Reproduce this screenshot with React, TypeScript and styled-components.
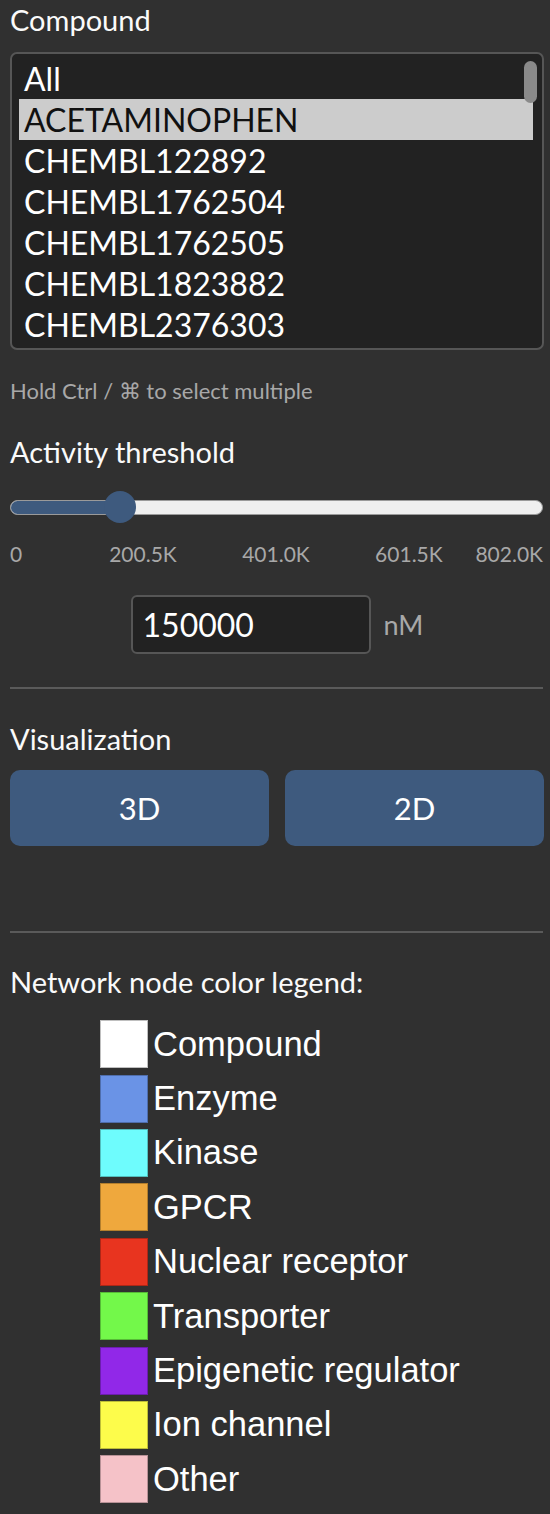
import React, { useState } from "react";
import styled, { createGlobalStyle } from "styled-components";

const GlobalStyle = createGlobalStyle`
  html, body {
    margin: 0;
    padding: 0;
    background: #303030;
  }
  * { box-sizing: border-box; }
`;

const Sidebar = styled.div`
  width: 550px;
  padding: 0 6px 12px 10px;
  font-family: Lato, "Noto Sans", sans-serif;
  color: #fafafa;
  display: flex;
  flex-direction: column;
`;

const Label = styled.div<{ $top?: number }>`
  font-size: 29px;
  line-height: 34px;
  margin-top: ${(p) => p.$top ?? 0}px;
`;

const ListBox = styled.div`
  position: relative;
  margin-top: 15px;
  height: 298px;
  background: #222222;
  border: 2px solid #565656;
  border-radius: 7px;
  padding: 4px 9px 0 7px;
  overflow: hidden;
`;

const Option = styled.div<{ $selected?: boolean }>`
  height: 41px;
  line-height: 41px;
  padding-left: 5px;
  font-size: 32px;
  white-space: nowrap;
  background: ${(p) => (p.$selected ? "#cccccc" : "transparent")};
  color: ${(p) => (p.$selected ? "#111111" : "#ffffff")};
`;

const ScrollThumb = styled.div`
  position: absolute;
  right: 5px;
  top: 7px;
  width: 13px;
  height: 42px;
  border-radius: 7px;
  background: #8a8a8a;
`;

const Hint = styled.div`
  margin-top: 27px;
  font-size: 22px;
  line-height: 28px;
  color: #a8a8a8;
`;

const SliderArea = styled.div`
  margin-top: 20px;
  width: 533px;
  height: 36px;
  display: flex;
  align-items: center;
  position: relative;
`;

const Track = styled.div`
  width: 533px;
  height: 15px;
  border-radius: 8px;
  background: #efefef;
  border: 1px solid #9a9a9a;
  overflow: hidden;
`;

const Fill = styled.div`
  height: 100%;
  background: #3e5a7e;
`;

const Thumb = styled.div`
  position: absolute;
  top: 50%;
  width: 32px;
  height: 32px;
  margin: -16px 0 0 -16px;
  border-radius: 50%;
  background: #3e5a7e;
`;

const Ticks = styled.div`
  margin-top: 17px;
  width: 533px;
  display: grid;
  grid-template-columns: repeat(8, 1fr);
  font-size: 21px;
  line-height: 24px;
  color: #a8a8a8;
`;

const Tick = styled.span<{ $col: string; $align: string }>`
  grid-column: ${(p) => p.$col};
  justify-self: ${(p) => p.$align};
  white-space: nowrap;
`;

const InputRow = styled.div`
  margin-top: 29px;
  display: flex;
  align-items: center;
  justify-content: center;
  gap: 13px;
`;

const NumberInput = styled.input`
  width: 240px;
  height: 59px;
  background: #222222;
  border: 2px solid #565656;
  border-radius: 6px;
  color: #ffffff;
  font-family: Lato, "Noto Sans", sans-serif;
  font-size: 32px;
  padding: 0 10px;
  outline: none;
`;

const Unit = styled.span`
  font-size: 27px;
  color: #a8a8a8;
`;

const Divider = styled.hr<{ $top: number }>`
  margin: ${(p) => p.$top}px 0 0 0;
  width: 533px;
  border: none;
  height: 2px;
  background: #5a5a5a;
`;

const ButtonRow = styled.div`
  margin-top: 14px;
  display: grid;
  grid-template-columns: 1fr 1fr;
  gap: 16px;
`;

const ModeButton = styled.button`
  height: 76px;
  border: none;
  border-radius: 10px;
  background: #3e5a7e;
  color: #ffffff;
  font-family: Lato, "Noto Sans", sans-serif;
  font-size: 31px;
  cursor: pointer;
`;

const Legend = styled.div`
  margin-top: 18px;
  padding-left: 90px;
  display: flex;
  flex-direction: column;
  font-family: "Liberation Sans", Arial, sans-serif;
`;

const LegendRow = styled.div`
  height: 54.4px;
  display: flex;
  align-items: center;
  gap: 5px;
  font-size: 34.5px;
  color: #ffffff;
`;

const Swatch = styled.div<{ $color: string }>`
  width: 48px;
  height: 48px;
  background: ${(p) => p.$color};
  border: 1px solid rgba(0, 0, 0, 0.25);
`;

const compounds = [
  "All",
  "ACETAMINOPHEN",
  "CHEMBL122892",
  "CHEMBL1762504",
  "CHEMBL1762505",
  "CHEMBL1823882",
  "CHEMBL2376303",
];

const legend: [string, string][] = [
  ["Compound", "#ffffff"],
  ["Enzyme", "#6a93e6"],
  ["Kinase", "#6efcfd"],
  ["GPCR", "#efa83d"],
  ["Nuclear receptor", "#e8341f"],
  ["Transporter", "#73f84a"],
  ["Epigenetic regulator", "#9128e8"],
  ["Ion channel", "#fdfc4b"],
  ["Other", "#f5c2c8"],
];

const MAX = 802000;
const TRACK_W = 533;
const THUMB_D = 32;

export default function App() {
  const [selected, setSelected] = useState("ACETAMINOPHEN");
  const [threshold, setThreshold] = useState(150000);
  const ratio = Math.min(1, Math.max(0, threshold / MAX));
  // thumb centre stays inside the track ends
  const thumbX = THUMB_D / 2 + ratio * (TRACK_W - THUMB_D);

  return (
    <Sidebar>
      <GlobalStyle />
      <Label $top={3}>Compound</Label>
      <ListBox role="listbox" aria-multiselectable="true">
        {compounds.map((c) => (
          <Option key={c} $selected={c === selected} onClick={() => setSelected(c)}>
            {c}
          </Option>
        ))}
        <ScrollThumb />
      </ListBox>
      <Hint>Hold Ctrl / ⌘ to select multiple</Hint>

      <Label $top={30}>Activity threshold</Label>
      <SliderArea>
        <Track>
          <Fill style={{ width: `${thumbX}px` }} />
        </Track>
        <Thumb style={{ left: `${thumbX}px` }} />
      </SliderArea>
      <Ticks>
        <Tick $col="1" $align="start">0</Tick>
        <Tick $col="2 / 4" $align="center">200.5K</Tick>
        <Tick $col="4 / 6" $align="center">401.0K</Tick>
        <Tick $col="6 / 8" $align="center">601.5K</Tick>
        <Tick $col="8" $align="end">802.0K</Tick>
      </Ticks>
      <InputRow>
        <NumberInput
          value={threshold}
          onChange={(e) => setThreshold(Number(e.target.value) || 0)}
        />
        <Unit>nM</Unit>
      </InputRow>

      <Divider $top={33} />
      <Label $top={33}>Visualization</Label>
      <ButtonRow>
        <ModeButton>3D</ModeButton>
        <ModeButton>2D</ModeButton>
      </ButtonRow>

      <Divider $top={85} />
      <Label $top={32}>Network node color legend:</Label>
      <Legend>
        {legend.map(([name, color]) => (
          <LegendRow key={name}>
            <Swatch $color={color} />
            {name}
          </LegendRow>
        ))}
      </Legend>
    </Sidebar>
  );
}
